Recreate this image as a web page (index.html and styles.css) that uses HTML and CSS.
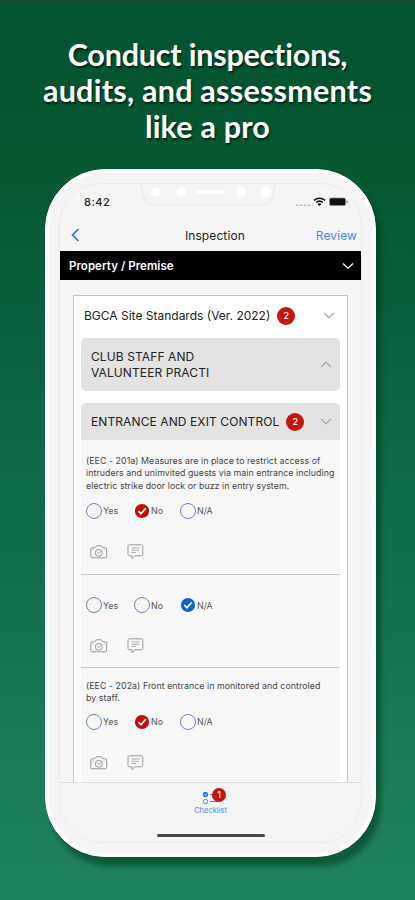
FILE: index.html
```html
<!DOCTYPE html>
<html lang="en">
<head>
    <meta charset="UTF-8">
    <meta name="viewport" content="width=device-width, initial-scale=1.0">
    <title>Inspection Checklist</title>
    <link rel="stylesheet" href="styles.css">
</head>
<body>
    <!-- Shared icons -->
    <svg class="icon-defs" width="0" height="0">
        <symbol id="check-on" viewBox="0 0 14 14">
            <circle cx="7" cy="7" r="6.2" fill="currentColor"/>
            <path d="M3.8 7.2l2.3 2.2 4.2-4.8" fill="none" stroke="#fff" stroke-width="1.5"/>
        </symbol>
        <symbol id="camera" viewBox="0 0 18 14">
            <g fill="none" stroke="#989898" stroke-width="1">
                <path d="M2 2.8h2.8L6.3.8h5l1.5 2h2.7c.8 0 1.2.5 1.2 1.2v7.6c0 .8-.5 1.2-1.2 1.2H2c-.8 0-1.2-.5-1.2-1.2V4c0-.7.5-1.2 1.2-1.2z"/>
                <circle cx="8.8" cy="7.8" r="3.5"/>
                <path d="M7.2 6.800l1.500 2.100 2-3M13.700 5h1M2.600 5h1.200" stroke-width=".8"/>
            </g>
        </symbol>
        <symbol id="note" viewBox="0 0 17 16">
            <g fill="none" stroke="#989898" stroke-width="1">
                <path d="M2.500.8h11.800c1 0 1.500.6 1.500 1.500v8c0 1-.6 1.500-1.500 1.500H7.800L5 14.700v-2.900H2.500C1.500 11.800 1 11.200 1 10.300v-8C1 1.400 1.500.8 2.500.8z"/>
                <path d="M4.500 4h8M4.500 6.300h7.500M4.500 8.500h4.500" stroke-width=".8"/>
            </g>
        </symbol>
        <symbol id="chevron" viewBox="0 0 12 7">
            <path d="M1 1l5 4.700L11 1" fill="none" stroke="currentColor" stroke-width="1.200"/>
        </symbol>
    </svg>

    <h1 class="headline">
        <span class="line-1">Conduct inspections,</span>
        <span class="line-2">audits, and assessments</span>
        <span class="line-3">like a pro</span>
    </h1>

    <div class="phone">
        <div class="screen">
            <svg class="notch" width="142" height="24" viewBox="0 0 142 24">
                <path d="M0 .5c3 0 4.500 1 5 5C6 16 8 22 18 22h106c10 0 12-6 13-16.500.5-4 2-5 5-5" fill="#f5f5f5" stroke="#e6e6e6"/>
                <circle cx="19" cy="9" r="5" fill="#fff"/>
                <circle cx="44" cy="9" r="5" fill="#fff"/>
                <rect x="58" y="7" width="32" height="4" rx="2" fill="#fff" stroke="#ececec" stroke-width=".5"/>
                <circle cx="104" cy="9" r="5" fill="#fff"/>
                <circle cx="129" cy="9" r="5.500" fill="#fff"/>
            </svg>

            <div class="status">
                <span class="time">8:42</span>
                <svg width="53" height="10" viewBox="0 0 53 10">
                    <path d="M0 8.200h14" stroke="#bbb" stroke-width="1.500" stroke-dasharray="2.500 1.300"/>
                    <path d="M18 3.300Q23.500-.8 29 3.300M20.200 5.500q3.300-2.700 6.600 0" fill="none" stroke="#111" stroke-width="1.600"/>
                    <path d="M21.500 7q2-1.500 4 0l-2 2z" fill="#111"/>
                    <rect x="33.500" y="1" width="16" height="7.500" rx="1.500" fill="#111" stroke="#888" stroke-width=".7"/>
                    <path d="M51 3.300v3" stroke="#777"/>
                </svg>
            </div>

            <div class="nav">
                <svg class="back" width="9" height="14" viewBox="0 0 9 14">
                    <path d="M7.500 1L1.500 7l6 6" fill="none" stroke="#2b73f0" stroke-width="1.700"/>
                </svg>
                <span class="title">Inspection</span>
                <a href="#" class="review">Review</a>
            </div>

            <div class="section-bar">
                <span class="section-name">Property / Premise</span>
                <svg width="12" height="8"><use href="#chevron"/></svg>
            </div>

            <div class="content">
                <div class="card">
                    <div class="card-head">
                        <span class="standard">BGCA Site Standards (Ver. 2022)</span>
                        <span class="badge">2</span>
                        <svg class="toggle" width="12" height="7"><use href="#chevron"/></svg>
                    </div>

                    <div class="group">
                        <span>CLUB STAFF AND<br>VALUNTEER PRACTI</span>
                        <svg class="toggle up" width="12" height="7"><use href="#chevron"/></svg>
                    </div>

                    <div class="group open">
                        <span>ENTRANCE AND EXIT CONTROL</span>
                        <span class="badge">2</span>
                        <svg class="toggle" width="12" height="7"><use href="#chevron"/></svg>
                    </div>

                    <div class="questions">
                        <div class="question first">
                            <p>(EEC - 201a) Measures are in place to restrict access of<br>intruders and unimvited guests via main entrance including<br>electric strike door lock or buzz in entry system.</p>
                            <div class="answers">
                                <span class="answer"><i class="radio"></i>Yes</span>
                                <span class="answer"><svg class="checked no" width="16" height="16"><use href="#check-on"/></svg>No</span>
                                <span class="answer"><i class="radio"></i>N/A</span>
                            </div>
                            <div class="tools">
                                <svg width="18" height="14"><use href="#camera"/></svg>
                                <svg width="17" height="16"><use href="#note"/></svg>
                            </div>
                        </div>

                        <div class="question second">
                            <div class="answers">
                                <span class="answer"><i class="radio"></i>Yes</span>
                                <span class="answer"><i class="radio"></i>No</span>
                                <span class="answer"><svg class="checked na" width="16" height="16"><use href="#check-on"/></svg>N/A</span>
                            </div>
                            <div class="tools">
                                <svg width="18" height="14"><use href="#camera"/></svg>
                                <svg width="17" height="16"><use href="#note"/></svg>
                            </div>
                        </div>

                        <div class="question third">
                            <p>(EEC - 202a) Front entrance in monitored and controled<br>by staff.</p>
                            <div class="answers">
                                <span class="answer"><i class="radio"></i>Yes</span>
                                <span class="answer"><svg class="checked no" width="16" height="16"><use href="#check-on"/></svg>No</span>
                                <span class="answer"><i class="radio"></i>N/A</span>
                            </div>
                            <div class="tools">
                                <svg width="18" height="14"><use href="#camera"/></svg>
                                <svg width="17" height="16"><use href="#note"/></svg>
                            </div>
                        </div>
                    </div>
                </div>
            </div>

            <div class="tabbar">
                <div class="tab">
                    <svg width="16" height="14" viewBox="0 0 16 14">
                        <circle cx="3.500" cy="3.500" r="2.700" fill="#2b73f0"/>
                        <path d="M2.200 3.500l1 1 1.600-2" fill="none" stroke="#fff" stroke-width=".7"/>
                        <circle cx="3.500" cy="10.500" r="2.200" fill="none" stroke="#4a85f0"/>
                        <path d="M8 3.500h7M8 10.500h7" stroke="#4a85f0" stroke-width="1.200"/>
                    </svg>
                    <span class="badge">1</span>
                    <span class="tab-label">Checklist</span>
                </div>
                <div class="home-bar"></div>
            </div>
        </div>
    </div>
</body>
</html>
```

FILE: styles.css
```css
* {
    margin: 0;
    padding: 0;
    box-sizing: border-box;
}

body {
    height: 900px;
    overflow: hidden;
    font-family: Inter, "Liberation Sans", sans-serif;
    color: #222;
    background: linear-gradient(180deg, #025331 0, #04572f 150px, #07603b 300px, #0f6c49 500px, #1b7c57 760px, #1f835e 900px);
    border-top: 1px solid #20492f;
}

.icon-defs {
    position: absolute;
}

/* Headline */
.headline {
    height: 168px;
    padding-top: 35px;
    font-family: Lato, sans-serif;
    font-size: 30.5px;
    font-weight: 700;
    font-variant-ligatures: none;
    line-height: 36px;
    color: #fff;
    text-align: center;
    text-shadow: 1px 2px 2px rgba(0, 0, 0, 0.6);
}

.headline span {
    display: block;
    white-space: nowrap;
}

.line-1 {
    letter-spacing: -0.2px;
}

.line-2 {
    letter-spacing: 0.25px;
}

.line-3 {
    letter-spacing: 0.2px;
}

/* Phone */
.phone {
    width: 331px;
    height: 688px;
    margin-left: 45px;
    padding: 13px;
    background: #f5f5f5;
    border: 1px solid #fff;
    border-radius: 60px;
    box-shadow: inset 0 0 0 3px #fdfdfd, 5px 9px 5px rgba(0, 50, 25, 0.5);
}

.screen {
    position: relative;
    height: 660px;
    display: flex;
    flex-direction: column;
    overflow: hidden;
    background: #f6f6f6;
    border: 1px solid #ececec;
    border-radius: 42px;
}

.notch {
    position: absolute;
    top: -1px;
    left: 77px;
}

.status {
    height: 35px;
    padding: 0 12px 0 24px;
    display: flex;
    justify-content: space-between;
    align-items: center;
}

.time {
    font-size: 11px;
    font-weight: 500;
    letter-spacing: 0.5px;
}

.nav {
    height: 32px;
    padding: 0 4px 0 11px;
    display: flex;
    justify-content: space-between;
    align-items: center;
    font-size: 12px;
    letter-spacing: 0.1px;
}

.nav .title {
    padding-left: 34px;
}

.nav .review {
    color: #4d87f5;
    text-decoration: none;
}

.section-bar {
    height: 29px;
    padding: 0 7px 0 9px;
    display: flex;
    justify-content: space-between;
    align-items: center;
    color: #fff;
    background: #000;
    font-size: 11.5px;
    font-weight: 600;
    letter-spacing: 0.05px;
}

/* Checklist */
.content {
    height: 502px;
    padding: 15px 13px 0;
    overflow: hidden;
}

.card {
    height: 500px;
    padding: 0 7px;
    background: #fff;
    border: 1px solid #c4c4c4;
    border-bottom: 0;
}

.card-head,
.group {
    display: flex;
    align-items: center;
    white-space: nowrap;
}

.card-head {
    height: 42px;
    padding: 0 5px 3px 3px;
    font-size: 12px;
}

.badge {
    width: 18px;
    height: 18px;
    flex: none;
    border-radius: 50%;
    background: #c4150f;
    color: #fff;
    font-size: 9px;
    font-weight: 500;
    line-height: 18px;
    text-align: center;
}

.card-head .badge,
.group .badge {
    margin-left: 7px;
}

.toggle {
    margin-left: auto;
    color: #a5a5a5;
}

.toggle.up {
    transform: rotate(180deg);
}

.group {
    height: 53px;
    margin-bottom: 12px;
    padding: 0 8px 0 10px;
    border-radius: 5px;
    background: #e3e3e3;
    font-size: 12px;
    letter-spacing: 0.1px;
    line-height: 15.5px;
}

.group.open {
    height: 37px;
    margin-bottom: 0;
    border-radius: 5px 5px 0 0;
}

.questions {
    height: 360px;
    background: #f8f8f8;
}

.question {
    padding-left: 5px;
    border-bottom: 1px solid #c9c9c9;
}

.question p {
    font-size: 8.8px;
    letter-spacing: 0.06px;
    line-height: 12.3px;
    color: #444;
    white-space: nowrap;
}

.first {
    height: 135px;
    padding-top: 15px;
}

.second {
    height: 93px;
    padding-top: 22px;
}

.third {
    padding-top: 12px;
    border-bottom: 0;
}

.answers {
    height: 16px;
    display: grid;
    grid-template-columns: 48px 46px 50px;
}

.first .answers {
    margin-top: 11px;
}

.third .answers {
    margin-top: 9px;
}

.answer {
    display: flex;
    align-items: center;
    gap: 1px;
    font-size: 8.8px;
    color: #555;
}

.radio {
    width: 16px;
    height: 16px;
    border: 1px solid #6e80d8;
    border-radius: 50%;
}

.checked.no {
    color: #c00d0d;
}

.checked.na {
    color: #1461d2;
}

.tools {
    margin-top: 25px;
    padding-left: 4px;
    display: flex;
    align-items: center;
    gap: 19px;
}

/* Bottom tab bar */
.tabbar {
    flex: 1;
    display: flex;
    flex-direction: column;
    align-items: center;
    background: #f5f5f5;
    border-top: 1px solid #dedede;
}

.tab {
    position: relative;
    height: 51px;
    padding-top: 8px;
    display: flex;
    flex-direction: column;
    align-items: center;
    gap: 1px;
}

.tab .badge {
    position: absolute;
    top: 5px;
    left: 18px;
    width: 14px;
    height: 14px;
    line-height: 14px;
}

.tab-label {
    font-size: 7.5px;
    color: #4d87f5;
}

.home-bar {
    width: 108px;
    height: 3px;
    flex: none;
    border-radius: 2px;
    background: #4a4a4a;
}
```
